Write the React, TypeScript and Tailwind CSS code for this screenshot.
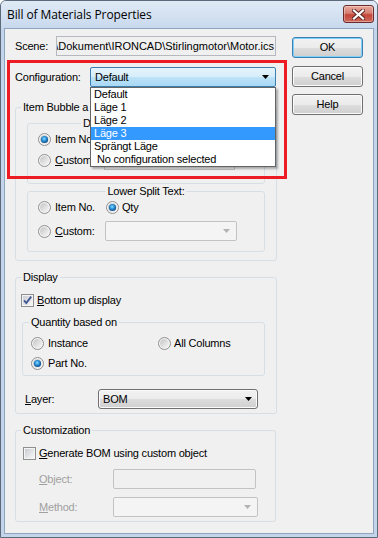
import React from "react";

const Radio = ({ checked = false }: { checked?: boolean }) => (
  <svg width="13" height="13" viewBox="0 0 13 13" className="shrink-0">
    <defs>
      <linearGradient id="rgIn" x1="0" y1="0" x2="1" y2="1">
        <stop offset="0" stopColor="#c4c4c4" />
        <stop offset="1" stopColor="#f8f8f8" />
      </linearGradient>
      <radialGradient id="rgDot" cx="0.45" cy="0.4" r="0.65">
        <stop offset="0" stopColor="#8fe0ff" />
        <stop offset="0.45" stopColor="#2a93dc" />
        <stop offset="1" stopColor="#0b3c73" />
      </radialGradient>
    </defs>
    <circle cx="6.5" cy="6.5" r="6" fill="#f4f4f4" stroke="#8f8f8f" strokeWidth="1" />
    <circle cx="6.5" cy="6.5" r="4.5" fill="url(#rgIn)" />
    {checked && <circle cx="6.5" cy="6.5" r="3.6" fill="url(#rgDot)" />}
  </svg>
);

const Check = ({ checked = false }: { checked?: boolean }) => (
  <svg width="13" height="13" viewBox="0 0 13 13" className="shrink-0">
    <defs>
      <linearGradient id="cbIn" x1="0" y1="0" x2="1" y2="1">
        <stop offset="0" stopColor="#c9ccd2" />
        <stop offset="1" stopColor="#f7f7f7" />
      </linearGradient>
    </defs>
    <rect x="0.5" y="0.5" width="12" height="12" fill="#f4f4f4" stroke="#8e8f8f" />
    <rect x="2" y="2" width="9" height="9" fill="url(#cbIn)" />
    {checked && (
      <path d="M3 6.3 L5.3 9 L10.2 2.6" fill="none" stroke="#3f5693" strokeWidth="1.8" />
    )}
  </svg>
);

const Arrow = ({ color = "#000" }: { color?: string }) => (
  <svg width="7" height="4" viewBox="0 0 7 4" className="shrink-0">
    <polygon points="0,0 7,0 3.5,4" fill={color} />
  </svg>
);

const Group = ({
  label,
  className = "",
  labelClass = "left-[5px]",
  children,
}: {
  label: React.ReactNode;
  className?: string;
  labelClass?: string;
  children?: React.ReactNode;
}) => (
  <div className={`relative border border-[#d5dfe5] rounded-[3px] ${className}`}>
    <span className={`absolute -top-[7px] px-[2px] bg-[#f0f0f0] leading-[13px] whitespace-nowrap ${labelClass}`}>
      {label}
    </span>
    {children}
  </div>
);

const Btn = ({ children, def = false, className = "" }: { children: React.ReactNode; def?: boolean; className?: string }) => (
  <div
    className={`w-[71px] h-[21px] rounded-[3px] border flex items-center justify-center bg-[linear-gradient(to_bottom,#f2f2f2_0%,#ebebeb_50%,#dddddd_51%,#cfcfcf_100%)] ${
      def ? "border-[#3c7fb1] shadow-[inset_0_0_0_1px_#7fd0fa]" : "border-[#707070] shadow-[inset_0_0_0_1px_#fbfbfb]"
    } ${className}`}
  >
    {children}
  </div>
);

const DisabledCombo = ({ w }: { w: string }) => (
  <div className={`${w} h-[20px] border border-[#c3c3c3] rounded-[2px] bg-[#f4f4f4] flex items-center justify-end pr-[6px]`}>
    <Arrow color="#b3b3b3" />
  </div>
);

export default function App() {
  return (
    <div className="relative w-[378px] h-[538px] flex flex-col bg-[#c2d5eb] border border-[#5d6a7a] rounded-t-[6px] overflow-hidden font-['Liberation_Sans',Arial,sans-serif] text-[11px] tracking-[-0.2px] leading-[13px] text-black">
      {/* Title bar */}
      <div className="h-[27px] shrink-0 flex items-start justify-between pl-[6px] pr-[3px] bg-[linear-gradient(to_bottom,#e0eaf6,#c8d9ed)]">
        <span className="mt-[6px] font-['Open_Sans',sans-serif] text-[12px] leading-[16px] tracking-[-0.1px]">
          Bill of Materials Properties
        </span>
        <div className="mt-[4px] w-[31px] h-[18px] rounded-[3px] border border-[#6b2b2b] bg-[linear-gradient(to_bottom,#e9a99c_0%,#d47f72_45%,#c4453a_55%,#cf6a5a_100%)] shadow-[inset_0_0_0_1px_rgba(255,255,255,0.35)] flex items-center justify-center">
          <svg width="13" height="11" viewBox="0 0 13 11">
            <path d="M2 1.5 L11 9.5 M11 1.5 L2 9.5" stroke="#5a2323" strokeWidth="4" strokeLinecap="square" />
            <path d="M2 1.5 L11 9.5 M11 1.5 L2 9.5" stroke="#ffffff" strokeWidth="2.2" strokeLinecap="square" />
          </svg>
        </div>
      </div>

      {/* Client area */}
      <div className="flex-1 mx-[3px] mb-[3px] bg-[#f0f0f0] border border-[#8fa5bf] flex items-start pl-[10px] pt-[7px]">
        {/* Left column */}
        <div className="w-[262px] flex flex-col">
          <div className="flex items-center h-[20px]">
            <span className="w-[41px]">Scene:</span>
            <div className="w-[220px] h-[20px] border border-[#b5b8be] bg-[#f0f0f0] overflow-hidden flex items-center justify-end pr-[1px] whitespace-nowrap tracking-normal">
              {"\\Dokument\\IRONCAD\\Stirlingmotor\\Motor.ics"}
            </div>
          </div>

          <div className="flex items-center h-[20px] mt-[11px]">
            <span className="w-[75px]">Configuration:</span>
            <div className="relative w-[186px] h-[20px] z-10">
              <div className="h-full border border-[#3c7fb1] rounded-[2px] bg-[linear-gradient(to_bottom,#e6f4fc_0%,#d6edfa_50%,#bde3f7_51%,#a8d8f4_100%)] flex items-center justify-between pl-[4px] pr-[6px]">
                <span>Default</span>
                <Arrow />
              </div>
              <div className="absolute left-0 top-[20px] w-[186px] h-[80px] bg-white border border-[#646464] shadow-[2px_2px_2px_rgba(0,0,0,0.3)] flex flex-col">
                <div className="h-[13px] pl-[3px]">Default</div>
                <div className="h-[13px] pl-[3px]">Läge 1</div>
                <div className="h-[13px] pl-[3px]">Läge 2</div>
                <div className="h-[13px] pl-[3px] bg-[#3399ff] text-white">Läge 3</div>
                <div className="h-[13px] pl-[3px]">Sprängt Läge</div>
                <div className="h-[13px] pl-[6px]">No configuration selected</div>
              </div>
            </div>
          </div>

          {/* Item Bubble group */}
          <Group label="Item Bubble a" className="mt-[20px] flex flex-col pb-[8px]">
            <Group label="D" labelClass="left-[53px]" className="mt-[15px] mx-[11px] h-[61px]">
              <div className="pl-[10px] pt-[9px] flex flex-col">
                <div className="flex items-center h-[13px]">
                  <Radio checked />
                  <span className="ml-[4px] w-[51px]">Item No.</span>
                  <Radio />
                  <span className="ml-[3px]">Qty</span>
                </div>
                <div className="flex items-center h-[20px] mt-[4px]">
                  <Radio />
                  <span className="ml-[4px] w-[49px]">
                    <u>C</u>ustom:
                  </span>
                  <div className="w-[131px] h-[20px] border border-[#c3c3c3] bg-[#f0f0f0]" />
                </div>
              </div>
            </Group>
            <Group label="Lower Split Text:" labelClass="left-1/2 -translate-x-1/2" className="mt-[7px] mx-[11px] h-[61px]">
              <div className="pl-[10px] pt-[9px] flex flex-col">
                <div className="flex items-center h-[13px]">
                  <Radio />
                  <span className="ml-[4px] w-[51px]">Item No.</span>
                  <Radio checked />
                  <span className="ml-[3px]">Qty</span>
                </div>
                <div className="flex items-center h-[20px] mt-[7px]">
                  <Radio />
                  <span className="ml-[4px] w-[50px]">
                    <u>C</u>ustom:
                  </span>
                  <DisabledCombo w="w-[132px]" />
                </div>
              </div>
            </Group>
          </Group>

          {/* Display group */}
          <Group label="Display" className="mt-[16px] flex flex-col pl-[5px] pt-[16px] pb-[4px]">
            <div className="flex items-center h-[13px]">
              <Check checked />
              <span className="ml-[3px]">
                <u>B</u>ottom up display
              </span>
            </div>
            <Group label="Quantity based on" labelClass="left-[6px]" className="mt-[15px] ml-[1px] mr-[11px] h-[54px] pl-[8px] pt-[14px] flex flex-col">
              <div className="flex items-center h-[13px]">
                <Radio />
                <span className="ml-[4px] w-[110px]">Instance</span>
                <Radio />
                <span className="ml-[3px]">All Columns</span>
              </div>
              <div className="flex items-center h-[13px] mt-[7px]">
                <Radio checked />
                <span className="ml-[4px]">Part No.</span>
              </div>
            </Group>
            <div className="flex items-center h-[20px] mt-[13px] pl-[4px]">
              <span className="w-[73px]">
                <u>L</u>ayer:
              </span>
              <div className="w-[160px] h-[20px] rounded-[3px] border border-[#707070] bg-[linear-gradient(to_bottom,#f2f2f2_0%,#ebebeb_50%,#dddddd_51%,#cfcfcf_100%)] shadow-[inset_0_0_0_1px_#fbfbfb] flex items-center justify-between pl-[4px] pr-[5px]">
                <span>BOM</span>
                <Arrow />
              </div>
            </div>
          </Group>

          {/* Customization group */}
          <Group label="Customization" className="mt-[16px] mr-[1px] flex flex-col pl-[7px] pt-[16px] pb-[4px]">
            <div className="flex items-center h-[13px]">
              <Check />
              <span className="ml-[3px]">
                <u>G</u>enerate BOM using custom object
              </span>
            </div>
            <div className="flex items-center h-[20px] mt-[9px] pl-[16px] text-[#a0a0a0]">
              <span className="w-[74px]">
                <u>O</u>bject:
              </span>
              <div className="w-[143px] h-[20px] border border-[#c3c3c3] rounded-[2px] bg-[#f0f0f0]" />
            </div>
            <div className="flex items-center h-[20px] mt-[8px] pl-[16px] text-[#a0a0a0]">
              <span className="w-[74px]">
                <u>M</u>ethod:
              </span>
              <DisabledCombo w="w-[145px]" />
            </div>
          </Group>
        </div>

        {/* Right column */}
        <div className="ml-[15px] pt-[1px] flex flex-col">
          <Btn def>OK</Btn>
          <Btn className="mt-[8px]">Cancel</Btn>
          <Btn className="mt-[7px]">Help</Btn>
        </div>
      </div>

      {/* Red annotation rectangle */}
      <div className="absolute left-[6px] top-[59px] w-[280px] h-[119px] border-[3px] border-[#ed1c24] pointer-events-none z-20" />
    </div>
  );
}
